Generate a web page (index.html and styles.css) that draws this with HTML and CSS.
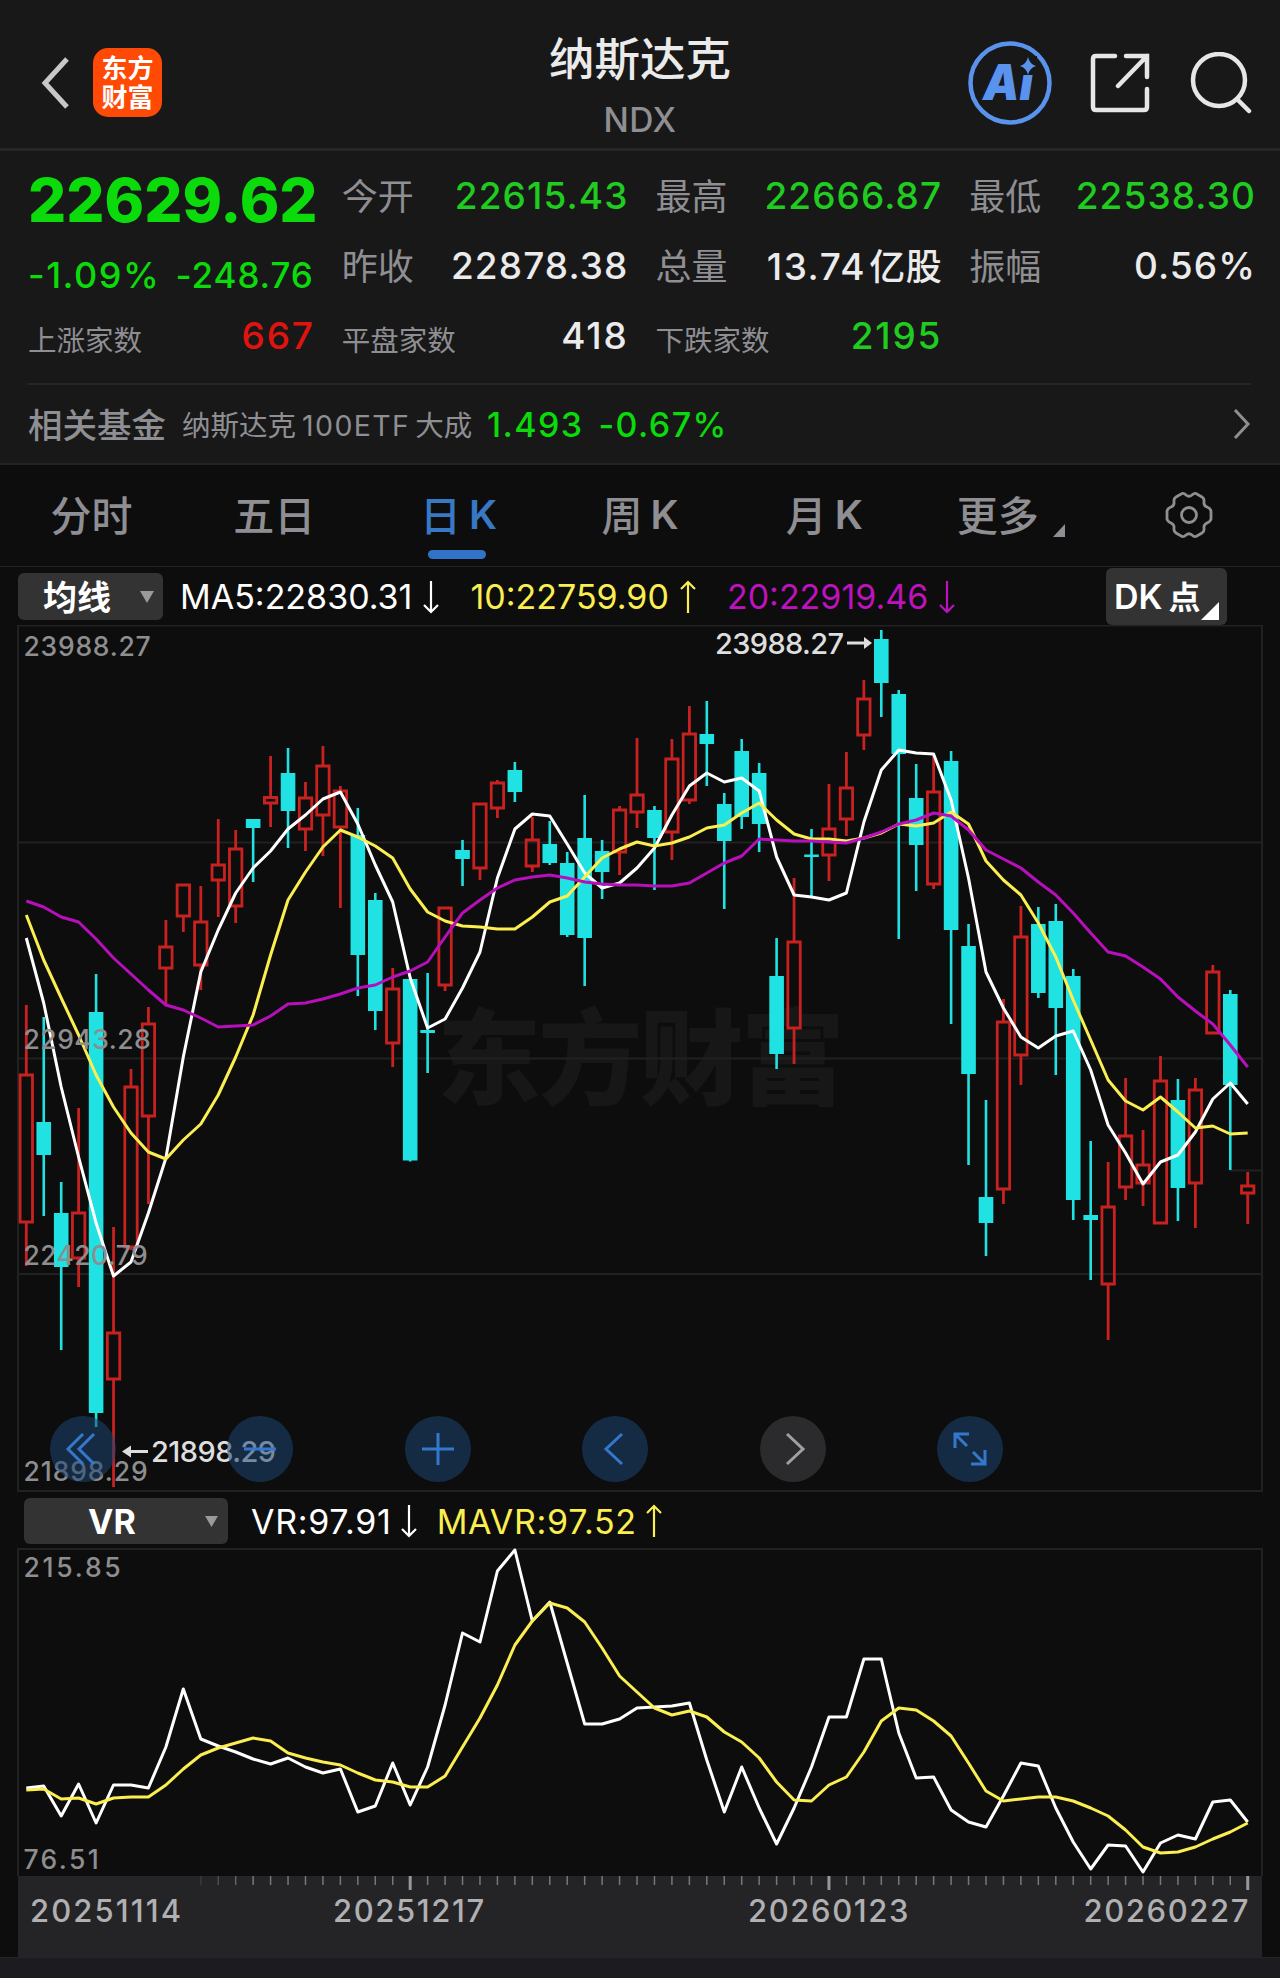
FILE: index.html
```html
<!DOCTYPE html>
<html lang="zh-CN">
<head>
  <meta charset="UTF-8">
  <meta name="viewport" content="width=device-width, initial-scale=1.0">
  <title>纳斯达克 NDX</title>
  <link rel="stylesheet" href="styles.css">
</head>
<body>
  <header class="header">
    <div class="header-left">
      <svg class="back" width="30" height="54" viewBox="0 0 30 54"><path d="M26 3 L4 27 L26 51"/></svg>
      <div class="logo"><span>东方</span><span>财富</span></div>
    </div>
    <div class="title">
      <h1>纳斯达克</h1>
      <p>NDX</p>
    </div>
    <div class="header-right">
      <svg class="ai" width="84" height="84" viewBox="0 0 84 84">
        <circle cx="42" cy="42" r="39.5"/>
        <text x="15" y="59" textLength="50" lengthAdjust="spacingAndGlyphs">Ai</text>
        <rect x="51" y="15" width="18" height="19"/>
        <path d="M60 16 Q61.500 23 68 25 Q61.500 27 60 34 Q58.500 27 52 25 Q58.500 23 60 16Z"/>
      </svg>
      <svg class="share" width="60" height="60" viewBox="0 0 60 60">
        <path d="M25 3 H6 Q3 3 3 6 V54 Q3 57 6 57 H54 Q57 57 57 54 V36 M36 3 H57 V24 M57 3 L28 33"/>
      </svg>
      <svg class="search" width="62" height="62" viewBox="0 0 62 62">
        <circle cx="29" cy="28" r="26"/><path d="M47 47 L59 59"/>
      </svg>
    </div>
  </header>

  <section class="quote">
    <div class="quote-grid">
      <div class="main-price">
        <div class="price">22629.62</div>
        <div class="change"><span class="pct">-1.09%</span><span>-248.76</span></div>
      </div>
      <div class="cell"><label>今开</label><b class="down">22615.43</b></div>
      <div class="cell"><label>最高</label><b class="down">22666.87</b></div>
      <div class="cell"><label>最低</label><b class="down">22538.30</b></div>
      <div class="cell"><label>昨收</label><b>22878.38</b></div>
      <div class="cell"><label>总量</label><b class="volume">13.74<i>亿股</i></b></div>
      <div class="cell"><label>振幅</label><b>0.56%</b></div>
      <div class="cell small"><label>上涨家数</label><b class="up">667</b></div>
      <div class="cell small"><label>平盘家数</label><b>418</b></div>
      <div class="cell small"><label>下跌家数</label><b class="down">2195</b></div>
    </div>
    <div class="fund">
      <span class="fund-label">相关基金</span>
      <span class="fund-name">纳斯达克<em>100ETF</em>大成</span>
      <span class="fund-value">1.493</span>
      <span class="fund-value">-0.67%</span>
      <svg class="more" width="18" height="32" viewBox="0 0 18 32"><path d="M2 2 L15 16 L2 30"/></svg>
    </div>
  </section>

  <nav class="tabs">
    <span class="tab">分时</span>
    <span class="tab">五日</span>
    <span class="tab active">日<em>K</em></span>
    <span class="tab">周<em>K</em></span>
    <span class="tab">月<em>K</em></span>
    <span class="tab tab-more">更多<svg width="12" height="13" viewBox="0 0 12 13"><path d="M12 0 V13 H0Z"/></svg></span>
    <span class="tab">
      <svg class="gear" width="50" height="50" viewBox="-25 -25 50 50">
        <path d="M-7 -21.500 Q-5 -22 -3 -20 Q0 -17.500 3 -20 Q5 -22 7 -21.500 L13 -18 Q15.500 -16.500 15 -13 Q14.500 -9.500 18 -8 Q21.500 -6.500 22 -4 V4 Q21.500 6.500 18 8 Q14.500 9.500 15 13 Q15.500 16.500 13 18 L7 21.500 Q5 22 3 20 Q0 17.500 -3 20 Q-5 22 -7 21.500 L-13 18 Q-15.500 16.500 -15 13 Q-14.500 9.500 -18 8 Q-21.500 6.500 -22 4 V-4 Q-21.500 -6.500 -18 -8 Q-14.500 -9.500 -15 -13 Q-15.500 -16.500 -13 -18 Z"/>
        <circle r="7.500"/>
      </svg>
    </span>
  </nav>

  <div class="indicator">
    <div class="picker"><span>均线</span><svg width="14" height="12" viewBox="0 0 14 12"><path d="M0 0 H14 L7 12Z"/></svg></div>
    <div class="legend white">MA5:22830.31<svg class="arrow" width="16" height="34" viewBox="0 0 16 34"><path d="M8 1 V32 M1 25 L8 32 L15 25"/></svg></div>
    <div class="legend yellow">10:22759.90<svg class="arrow" width="16" height="34" viewBox="0 0 16 34"><path d="M8 33 V2 M1 9 L8 2 L15 9"/></svg></div>
    <div class="legend purple">20:22919.46<svg class="arrow" width="16" height="34" viewBox="0 0 16 34"><path d="M8 1 V32 M1 25 L8 32 L15 25"/></svg></div>
    <div class="dk">DK<span>点</span><svg width="18" height="18" viewBox="0 0 18 18"><path d="M18 0 V18 H0Z"/></svg></div>
  </div>

  <div class="chart-wrap">
    <svg id="kline" width="1280" height="867" viewBox="0 625 1280 867"></svg>
    <div class="toolbar">
      <button><svg viewBox="-33 -33 66 66"><path d="M0 -15 L-15 0 L0 15 M11 -15 L-4 0 L11 15"/></svg></button>
      <button><svg viewBox="-33 -33 66 66"><path d="M-16 0 H16"/></svg></button>
      <button><svg viewBox="-33 -33 66 66"><path d="M-16 0 H16 M0 -16 V16"/></svg></button>
      <button><svg viewBox="-33 -33 66 66"><path d="M7 -15 L-9 0 L7 15"/></svg></button>
      <button class="off"><svg viewBox="-33 -33 66 66"><path d="M-6 -15 L10 0 L-6 15"/></svg></button>
      <button><svg viewBox="-33 -33 66 66"><path d="M-1 -15 H-15 V-1 M-15 -15 L-3 -3 M1 15 H15 V1 M15 15 L3 3"/></svg></button>
    </div>
  </div>

  <div class="indicator vr">
    <div class="picker wide">VR<svg width="13" height="11" viewBox="0 0 14 12"><path d="M0 0 H14 L7 12Z"/></svg></div>
    <div class="legend white">VR:97.91<svg class="arrow" width="16" height="34" viewBox="0 0 16 34"><path d="M8 1 V32 M1 25 L8 32 L15 25"/></svg></div>
    <div class="legend yellow">MAVR:97.52<svg class="arrow" width="16" height="34" viewBox="0 0 16 34"><path d="M8 33 V2 M1 9 L8 2 L15 9"/></svg></div>
  </div>

  <svg id="vr" width="1280" height="328" viewBox="0 1548 1280 328"></svg>

  <div class="axis">
    <svg id="ticks" width="1244" height="15" viewBox="18 0 1244 15"></svg>
    <div class="dates">
      <span>20251114</span><span>20251217</span><span>20260123</span><span>20260227</span>
    </div>
  </div>
  <footer class="bottom"></footer>

  <script src="chart.js"></script>
</body>
</html>
```
FILE: styles.css
```css
* {
  box-sizing: border-box;
}

body {
  margin: 0;
  width: 1280px;
  height: 1978px;
  overflow: hidden;
  background: #0d0d0d;
  color: #ebebeb;
  font-family: Inter, "Noto Sans CJK SC", sans-serif;
}

svg {
  display: block;
  fill: none;
}

em, i {
  font-style: normal;
}

/* header */
.header {
  display: grid;
  grid-template-columns: 1fr 300px 1fr;
  height: 151px;
  background: #181818;
  border-bottom: 3px solid #262626;
}

.header-left {
  display: flex;
  align-items: center;
  gap: 22px;
  padding: 17px 0 0 41px;
}

.back path {
  stroke: #c8c8c8;
  stroke-width: 5;
}

.logo {
  display: flex;
  flex-direction: column;
  align-items: center;
  justify-content: center;
  width: 69px;
  height: 69px;
  border-radius: 15px;
  background: #ff4a05;
  color: #fff;
  font-size: 26px;
  font-weight: 700;
  line-height: 29px;
}

.title {
  padding-top: 27px;
  text-align: center;
}

.title h1 {
  margin: 0;
  font-size: 45.500px;
  font-weight: 500;
  line-height: 66px;
}

.title p {
  margin: 6px 0 0;
  color: #8e8e93;
  font-size: 33.500px;
  font-weight: 500;
  line-height: 42px;
  letter-spacing: 0.500px;
}

.header-right {
  display: flex;
  align-items: center;
  justify-content: flex-end;
  padding: 18px 28px 0 0;
}

.ai {
  margin-right: 38px;
}

.ai circle {
  stroke: #5a93ee;
  stroke-width: 4.500;
}

.ai text {
  fill: #5a93ee;
  font-size: 49px;
  font-weight: 900;
  font-style: italic;
}

.ai rect {
  fill: #181818;
}

.ai path {
  fill: #5a93ee;
}

.share {
  margin-right: 40px;
}

.share path,
.search circle,
.search path {
  stroke: #e6e6e6;
  stroke-width: 4.500;
  stroke-linecap: round;
}

/* quote */
.quote {
  height: 314px;
  padding: 9px 25px 0 28px;
  background: #181818;
  border-bottom: 2px solid #232323;
}

.quote-grid {
  display: grid;
  grid-template-columns: repeat(4, minmax(0, 1fr));
  grid-template-rows: repeat(3, 70px);
  column-gap: 28px;
  height: 223px;
}

.main-price {
  grid-row: span 2;
  color: #0bda0b;
}

.price {
  height: 80px;
  font-size: 60px;
  font-weight: 800;
  line-height: 80px;
}

.change {
  display: flex;
  justify-content: space-between;
  font-size: 35px;
  font-weight: 500;
  line-height: 70px;
  letter-spacing: 0.900px;
}

.change .pct {
  font-size: 36px;
  letter-spacing: 1.500px;
}

.cell {
  display: flex;
  align-items: center;
  justify-content: space-between;
}

.cell label {
  padding-bottom: 3px;
  color: #8e8e93;
  font-size: 36px;
}

.cell b {
  margin-right: -1px;
  font-size: 37px;
  font-weight: 500;
  letter-spacing: 1.100px;
  white-space: nowrap;
}

.cell .volume {
  padding-bottom: 2px;
  letter-spacing: 1.600px;
}

.cell b i {
  margin-left: 3px;
  font-size: 36px;
  letter-spacing: 0.500px;
}

.cell.small label {
  padding-top: 6px;
  padding-bottom: 0;
  font-size: 28.500px;
}

.cell.small b {
  letter-spacing: 1.800px;
}

.down {
  color: #1fcc1f;
}

.up {
  color: #e0140f;
}

.fund {
  display: flex;
  align-items: center;
  height: 80px;
  margin-right: 4px;
  border-top: 2px solid #262626;
  color: #8e8e93;
}

.fund-label {
  width: 154px;
  padding-bottom: 3px;
  font-size: 34.500px;
  font-weight: 500;
}

.fund-name {
  width: 305px;
  padding-bottom: 2px;
  font-size: 28.500px;
  white-space: nowrap;
}

.fund-name em {
  margin: 0 5px 0 6px;
  letter-spacing: 1.400px;
}

.fund-value {
  margin-right: 15px;
  color: #0bda0b;
  font-size: 34px;
  font-weight: 500;
  letter-spacing: 1.400px;
}

.more {
  margin-left: auto;
}

.more path {
  stroke: #8e8e93;
  stroke-width: 3;
}

/* tabs */
.tabs {
  display: grid;
  grid-template-columns: repeat(7, 1fr);
  height: 102px;
  border-bottom: 1px solid #232323;
}

.tab {
  position: relative;
  display: flex;
  align-items: center;
  justify-content: center;
  padding-bottom: 5px;
  color: #8e8e93;
  font-size: 41px;
  font-weight: 500;
}

.tab em {
  margin-top: 3px;
  margin-left: 8px;
  font-size: 40px;
  font-weight: 600;
}

.tab.active {
  color: #3878c4;
}

.tab.active::after {
  content: "";
  position: absolute;
  bottom: 7px;
  left: 62px;
  width: 58px;
  height: 9px;
  border-radius: 5px;
  background: #3273c8;
}

.tab:nth-child(3),
.tab:nth-child(5) {
  padding-left: 3px;
}

.tab-more {
  padding-left: 10px;
}

.tab-more svg {
  margin: 34px 0 0 14px;
  fill: #8e8e93;
}

.gear {
  margin-top: 3px;
  stroke: #8e8e93;
  stroke-width: 2.800;
}

/* indicator rows */
.indicator {
  display: flex;
  align-items: center;
  height: 58px;
  padding: 1px 53px 0 18px;
}

.picker {
  display: flex;
  align-items: center;
  justify-content: space-between;
  width: 145px;
  height: 47px;
  margin-right: 17px;
  padding: 0 9px 0 25px;
  border-radius: 6px;
  background: #333;
  color: #fff;
  font-size: 34px;
  font-weight: 700;
}

.picker span {
  padding-bottom: 3px;
}

.picker svg {
  fill: #9a9a9a;
}

.legend {
  display: flex;
  align-items: center;
  margin-right: 31px;
  font-size: 34px;
  font-weight: 400;
}

.arrow {
  margin-left: 11px;
  stroke: currentColor;
  stroke-width: 2.200;
}

.white {
  color: #fff;
}

.yellow {
  color: #fbee50;
}

.purple {
  color: #bd12bd;
}

.dk {
  position: relative;
  display: flex;
  align-items: center;
  width: 121px;
  height: 57px;
  margin-left: auto;
  padding-left: 8px;
  border-radius: 6px;
  background: #333;
  color: #fff;
  font-size: 34px;
  font-weight: 600;
}

.dk span {
  margin-left: 6px;
  padding-bottom: 3px;
  font-size: 32px;
}

.dk svg {
  position: absolute;
  right: 8px;
  bottom: 5px;
  fill: #fff;
}

.vr {
  height: 56px;
  padding: 2px 0 0 24px;
}

.vr .picker {
  width: 204px;
  height: 46px;
  margin-right: 23px;
  padding: 0 10px 0 64px;
}

.vr .legend {
  margin-right: 20px;
  letter-spacing: 0.700px;
}

.vr .arrow {
  margin-left: 9px;
}

/* charts */
.chart-wrap {
  position: relative;
  height: 867px;
}

.toolbar {
  position: absolute;
  left: 49.500px;
  bottom: 10px;
  display: flex;
  gap: 111.500px;
}

.toolbar button {
  width: 66px;
  height: 66px;
  padding: 0;
  border: none;
  border-radius: 50%;
  background: rgba(30, 70, 115, 0.55);
}

.toolbar svg {
  width: 66px;
  height: 66px;
  stroke: #3378cc;
  stroke-width: 3;
}

.toolbar .off {
  background: #2b2b2d;
}

.toolbar .off svg {
  stroke: #a0a0a0;
}

.frame, .grid {
  stroke: #212121;
  stroke-width: 2;
}

.watermark {
  fill: #171717;
  font-size: 104px;
  font-weight: 900;
}

.scale {
  fill: #8e8e90;
  font-size: 26.500px;
  font-weight: 500;
  letter-spacing: 0.800px;
}

.extreme {
  fill: #dedede;
  font-size: 29px;
  font-weight: 500;
}

.pointer {
  stroke: #dedede;
  stroke-width: 3;
}

.pointer-head {
  fill: #dedede;
}

.rise {
  stroke: #c82220;
  stroke-width: 2.800;
}

.fall {
  fill: #20e2e2;
}

.line {
  stroke-width: 3;
  stroke-linejoin: round;
}

.line.white { stroke: #fff; }
.line.yellow { stroke: #fbee50; }
.line.purple { stroke: #b80fbc; }

.axis {
  height: 81px;
  margin: 0 18px;
  background: #242427;
}

.tick {
  stroke: #77777a;
  stroke-width: 1.500;
}

.tick.major {
  stroke: #98989a;
  stroke-width: 3;
}

.dates {
  display: grid;
  grid-template-columns: 303px 415px 1fr auto;
  padding: 0 12px 0 12px;
  color: #b0b0b3;
  font-size: 31px;
  font-weight: 500;
  line-height: 40px;
  letter-spacing: 1.600px;
}

.dates span:first-child {
  letter-spacing: 2.100px;
}

.bottom {
  height: 21px;
  background: #1c1b20;
  border-top: 1px solid #252529;
}
```
FILE: chart.js
```js
// one entry per trading day: type (r = rise, f = fall), high, body top, body bottom, low
const candles = [
  ['r', 1005, 1075, 1222, 1266], ['f', 1017, 1122, 1155, 1216], ['f', 1182, 1213, 1267, 1350],
  ['r', 1108, 1213, 1258, 1287], ['f', 974, 1012, 1413, 1427], ['r', 1227, 1333, 1379, 1487],
  ['r', 1069, 1087, 1247, 1250], ['r', 1007, 1024, 1116, 1204], ['r', 920, 947, 968, 1005],
  ['r', 885, 885, 916, 932], ['r', 886, 922, 965, 990], ['r', 819, 865, 880, 917],
  ['r', 830, 849, 906, 923], ['f', 819, 819, 828, 882], ['r', 756, 797.5, 803, 827],
  ['f', 748, 773, 811, 848], ['r', 782, 798, 829, 851], ['r', 746, 766, 815, 856],
  ['r', 786, 791, 827, 908], ['f', 808, 835, 955, 996], ['f', 893, 900, 1011, 1030],
  ['r', 968, 989, 1043, 1067], ['f', 979, 979, 1160.5, 1161.5], ['f', 973, 1030, 1033, 1073],
  ['r', 908, 908, 985, 991], ['f', 840, 850, 859, 886], ['r', 804, 804, 868, 880],
  ['r', 780, 783, 808, 818], ['f', 762, 770, 792, 802], ['r', 817, 840, 866, 872],
  ['f', 821, 844, 863, 865], ['f', 852, 863, 935, 937], ['f', 795, 838, 938, 986],
  ['f', 840, 851, 872, 899], ['r', 806, 810, 852, 875], ['r', 738, 795, 812, 828],
  ['f', 806, 810, 838, 890], ['r', 739, 759, 832, 860], ['r', 706, 734, 800, 804],
  ['f', 701, 734, 744, 786], ['f', 793, 804, 841, 909], ['f', 739, 751, 817, 829],
  ['f', 763, 773, 824, 852], ['f', 938, 976, 1054, 1069], ['r', 878, 942, 1028, 1064],
  ['f', 829, 854.5, 857, 897], ['r', 784, 829, 855, 881], ['r', 752, 788, 819, 836],
  ['r', 680, 699, 735, 750], ['f', 630, 639, 683, 717], ['f', 690, 694, 754, 939],
  ['f', 764, 798, 845, 891], ['r', 755, 792, 884, 889], ['f', 751, 761, 930, 1024],
  ['f', 924, 946, 1074, 1165], ['f', 1100, 1197, 1223, 1256], ['r', 999, 1022, 1189, 1204],
  ['r', 906, 937, 1055, 1085], ['f', 907, 924, 993, 998], ['f', 904, 921, 1008, 1075],
  ['f', 969, 976, 1200, 1220], ['f', 1141, 1215, 1220, 1280], ['r', 1162, 1207, 1284, 1340],
  ['r', 1078, 1136, 1187, 1200], ['r', 1130, 1165, 1183, 1206], ['r', 1056, 1081, 1223, 1224],
  ['f', 1079, 1100, 1188, 1221], ['r', 1078, 1090, 1183, 1228], ['r', 965, 972, 1033, 1034],
  ['f', 990, 994, 1085, 1170], ['r', 1172, 1186, 1193, 1224]
];

const ma5 = [938, 1003, 1087, 1157, 1223, 1276, 1262, 1213, 1158, 1057, 972, 930, 893, 868, 851, 829, 815, 799, 792, 824, 865, 902, 978, 1028, 1019, 988, 952, 878, 829, 814, 816, 844, 873, 888, 883, 868, 848, 815, 786, 773, 782, 778, 791, 857, 895, 897, 900, 893, 822, 770, 750, 753, 754, 800, 878, 972, 1008, 1037, 1048, 1036, 1031, 1070, 1125, 1153, 1184, 1162, 1155, 1132, 1099, 1083, 1104];
const ma10 = [915, 960, 998, 1035, 1075, 1107, 1133, 1152, 1159, 1140, 1124, 1095, 1057, 1015, 955, 900, 872, 847, 830, 837, 846, 858, 889, 912, 921, 926, 927, 929, 929, 917, 902, 896, 877, 858, 849, 842, 846, 843, 837, 828, 825, 813, 803, 820, 834, 839, 839, 841, 838, 833, 824, 826, 823, 812, 824, 861, 880, 895, 923, 957, 1000, 1040, 1080, 1101, 1110, 1097, 1112, 1128, 1126, 1134, 1133];
const ma20 = [901, 907, 917, 922, 939, 958, 974, 990, 1005, 1010, 1018, 1027, 1026, 1025, 1016, 1004, 1003, 999, 994, 988, 985, 977, 971, 962, 937, 913, 900, 888, 880, 877, 875, 878, 882, 884, 885, 885, 886, 886, 883, 873, 863, 856, 839, 840, 841, 841, 842, 843, 838, 832, 824, 820, 813, 816, 830, 850, 859, 868, 882, 895, 913, 933, 952, 956, 967, 979, 997, 1011, 1024, 1045, 1067];
const vr = [1788, 1786, 1816, 1784, 1823, 1785, 1785, 1788, 1747, 1689, 1739, 1746, 1752, 1759, 1764, 1758, 1767, 1773, 1769, 1812, 1806, 1763, 1805, 1767, 1705, 1633, 1642, 1571, 1550, 1621, 1602, 1663, 1724, 1724, 1719, 1708, 1707, 1706, 1703, 1760, 1812, 1767, 1808, 1844, 1808, 1767, 1717, 1717, 1659, 1659, 1733, 1778, 1777, 1810, 1822, 1827, 1796, 1763, 1766, 1808, 1842, 1869, 1845, 1846, 1872, 1843, 1835, 1839, 1802, 1800, 1822];
const mavr = [1790, 1789, 1799, 1798, 1804, 1798, 1797, 1797, 1785, 1769, 1755, 1748, 1743, 1738, 1741, 1753, 1758, 1762, 1765, 1773, 1780, 1782, 1787, 1787, 1776, 1747, 1718, 1685, 1645, 1621, 1603, 1608, 1622, 1648, 1676, 1692, 1708, 1715, 1711, 1717, 1732, 1742, 1758, 1782, 1800, 1801, 1785, 1777, 1752, 1721, 1708, 1710, 1721, 1736, 1763, 1791, 1801, 1799, 1797, 1797, 1801, 1808, 1816, 1830, 1847, 1853, 1852, 1847, 1839, 1832, 1823];

const xAt = i => 26.3 + i * 17.449;

function polyline(values, cls) {
  const points = values.map((y, i) => `${xAt(i).toFixed(1)},${y}`).join(' ');
  return `<polyline class="line ${cls}" points="${points}"/>`;
}

function candle([type, high, top, bottom, low], i) {
  const x = xAt(i);
  if (type === 'f') {
    return `<g class="fall"><rect x="${x - 1.3}" y="${high}" width="2.600" height="${low - high}"/>` +
      `<rect x="${x - 7.3}" y="${top}" width="14.600" height="${bottom - top}"/></g>`;
  }
  return `<path class="rise" d="M${x} ${high} V${top} M${x} ${bottom} V${low} M${x - 6.2} ${top} h12.400 V${bottom} h-12.400 Z"/>`;
}

document.getElementById('kline').innerHTML = `
  <text class="watermark" x="437" y="1097" textLength="408">东方财富</text>
  <path class="grid" d="M18 842.5 H1262 M18 1058.5 H1262 M18 1274 H1262 M1230 1170.5 H1262"/>
  <path class="frame" d="M18 625.500 H1262 V1491 H18 Z"/>
  ${candles.map(candle).join('')}
  ${polyline(ma5, 'white')}
  ${polyline(ma10, 'yellow')}
  ${polyline(ma20, 'purple')}
  <text class="scale" x="23.500" y="655.500" textLength="128">23988.27</text>
  <text class="scale" x="23.500" y="1048.500" textLength="128">22943.28</text>
  <text class="scale" x="23.500" y="1264.500" textLength="125">22420.79</text>
  <text class="scale" x="23.500" y="1481" textLength="125">21898.29</text>
  <text class="extreme" x="715" y="653.500" textLength="129">23988.27</text>
  <path class="pointer" d="M847 643 H866"/><path class="pointer-head" d="M864 637 L872 643 L864 649Z"/>
  <path class="pointer" d="M148 1451.500 H130"/><path class="pointer-head" d="M131 1445.500 L122 1451.500 L131 1457.500Z"/>
  <text class="extreme" x="151" y="1462" textLength="125">21898.29</text>
`;

document.getElementById('vr').innerHTML = `
  <path class="frame" d="M18 1876 V1549 H1262 V1876"/>
  ${polyline(vr, 'white')}
  ${polyline(mavr, 'yellow')}
  <text class="scale" x="23.500" y="1577" textLength="98">215.85</text>
  <text class="scale" x="23.500" y="1869" textLength="76">76.51</text>
`;

let ticks = '';
for (let i = 10; i < candles.length; i++) {
  const major = i === 22 || i === 46 || i === 70;
  const opacity = i < 13 ? (i - 9) / 4 : 1;
  ticks += `<path class="tick ${major ? 'major' : ''}" opacity="${opacity}" d="M${xAt(i)} 0 V${major ? 14 : 9}"/>`;
}
document.getElementById('ticks').innerHTML = ticks;
```
